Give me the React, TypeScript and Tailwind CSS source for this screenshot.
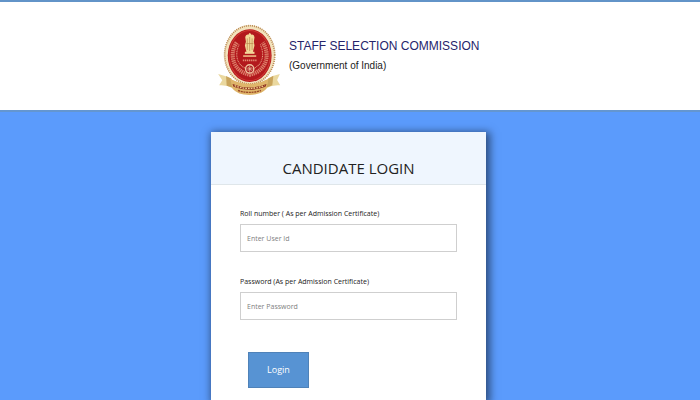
import React, { useState } from "react";

interface FieldProps {
  id: string;
  label: string;
  placeholder: string;
  type: string;
  value: string;
  onChange: (value: string) => void;
}

const Emblem: React.FC = () => {
  return (
    <svg
      viewBox="27 28 186 210"
      className="h-[72px] w-16 shrink-0"
      role="img"
      aria-label="Commission emblem"
    >
      {/* scalloped rim and red oval */}
      <ellipse cx="122" cy="118" rx="74" ry="87" fill="#f3e3bd" />
      <ellipse
        cx="122"
        cy="118"
        rx="73"
        ry="85"
        fill="none"
        stroke="#b98a55"
        strokeWidth="5"
        strokeDasharray="3 3"
      />
      <ellipse cx="122" cy="120" rx="64" ry="77" fill="#b3191d" />
      <ellipse
        cx="122"
        cy="120"
        rx="60"
        ry="73"
        fill="none"
        stroke="#cf3a33"
        strokeWidth="3"
      />
      {/* wreath */}
      <path
        d="M84 82C60 118 74 166 122 176C170 166 184 118 160 82"
        fill="none"
        stroke="#dc7d68"
        strokeWidth="12"
        strokeDasharray="4 2"
      />
      <path
        d="M91 88C76 121 86 153 122 162C158 153 168 121 153 88"
        fill="none"
        stroke="#e6a184"
        strokeWidth="3"
        strokeDasharray="3 2"
      />
      {/* lion capital */}
      <path
        d="M109 66Q111 57 118 59Q122 49 127 59Q135 57 136 67L134 80L136 91L131 111H113L108 91L111 80Z"
        fill="#f2d998"
      />
      <path
        d="M115 70V104M122 66V107M129 70V104M112 85H133"
        stroke="#b8864b"
        strokeWidth="2"
        fill="none"
      />
      <path d="M108 109H136V115H108Z" fill="#f3d79a" />
      <path d="M103 119H141V124H103Z" fill="#e9b080" />
      <path
        d="M102 134H143"
        stroke="#e38b72"
        strokeWidth="5"
        strokeDasharray="4 2"
      />
      {/* wheel */}
      <circle
        cx="122"
        cy="159"
        r="12"
        fill="#a81820"
        stroke="#f0c6a0"
        strokeWidth="4"
      />
      <path
        d="M122 150V168M113 159H131M116 153L128 165M128 153L116 165"
        stroke="#f0c6a0"
        strokeWidth="2"
      />
      {/* ribbon */}
      <path
        d="M30 174Q51 178 69 188L75 216Q54 205 33 207L42 192Z"
        fill="#ead89f"
      />
      <path
        d="M210 174Q192 177 174 188L168 216Q190 205 211 207L202 191Z"
        fill="#ead89f"
      />
      <path d="M53 180L68 187L73 214L55 208Z" fill="#c9a45c" />
      <path d="M191 179L176 187L170 214L188 207Z" fill="#c9a45c" />
      <path
        d="M65 188Q121 217 177 188L171 217Q154 235 121 235Q87 235 72 217Z"
        fill="#dfb56a"
      />
      <path
        d="M72 203Q121 224 171 203L168 211Q121 229 75 211Z"
        fill="#8b2b1c"
      />
      <path
        d="M78 208Q121 224 165 208"
        stroke="#efd08b"
        strokeWidth="4"
        strokeDasharray="5 3"
        fill="none"
      />
      <path
        d="M88 222Q121 233 155 222"
        stroke="#9a4a26"
        strokeWidth="4"
        strokeDasharray="6 2"
        fill="none"
      />
    </svg>
  );
};

const Field: React.FC<FieldProps> = ({
  id,
  label,
  placeholder,
  type,
  value,
  onChange,
}) => {
  return (
    <div className="flex flex-col">
      <label
        htmlFor={id}
        className="whitespace-nowrap text-[7px] leading-3 text-[#222222]"
      >
        {label}
      </label>
      <input
        id={id}
        type={type}
        value={value}
        placeholder={placeholder}
        onChange={(e) => onChange(e.target.value)}
        className="mt-1 h-7 w-full border border-[#cfcfcf] bg-white px-1.5 text-[7px] text-[#222222] placeholder:text-[#808080]"
      />
    </div>
  );
};

const App: React.FC = () => {
  const [rollNumber, setRollNumber] = useState("");
  const [password, setPassword] = useState("");

  return (
    <div className="flex min-h-screen flex-col bg-[#5b9bfc]">
      <header className="flex border-t-2 border-b-2 border-t-[#6294c8] border-b-[#6496d0] bg-white pt-[22px] pb-3.5 pl-[31%]">
        <Emblem />
        <div className="ml-2 pt-3 font-['Liberation_Sans',sans-serif]">
          <h1 className="text-[12px] leading-5 text-[#25256b]">
            STAFF SELECTION COMMISSION
          </h1>
          <p className="text-[10px] leading-5 text-[#222222]">
            (Government of India)
          </p>
        </div>
      </header>
      <main className="flex flex-1 flex-col items-center pt-5 pr-[3px] font-['Open_Sans',sans-serif]">
        <section className="w-[275px] flex-1 bg-white shadow-[2px_2px_8px_2px_rgba(0,0,0,0.5)]">
          <h2 className="border-b border-[#dfe6ea] bg-[#eff6fe] pt-6 pb-1 text-center text-[15px] leading-6 font-medium text-[#222222]">
            CANDIDATE LOGIN
          </h2>
          <form
            className="flex flex-col gap-6 px-[29px] pt-[23px]"
            onSubmit={(e) => e.preventDefault()}
          >
            <Field
              id="roll-number"
              label="Roll number ( As per Admission Certificate)"
              placeholder="Enter User Id"
              type="text"
              value={rollNumber}
              onChange={setRollNumber}
            />
            <Field
              id="password"
              label="Password (As per Admission Certificate)"
              placeholder="Enter Password"
              type="password"
              value={password}
              onChange={setPassword}
            />
            <button
              type="submit"
              className="mt-2 ml-2 h-9 w-[61px] border border-[#4f82b8] bg-[#5793d3] text-[9px] text-white"
            >
              Login
            </button>
          </form>
        </section>
      </main>
    </div>
  );
};

export default App;
